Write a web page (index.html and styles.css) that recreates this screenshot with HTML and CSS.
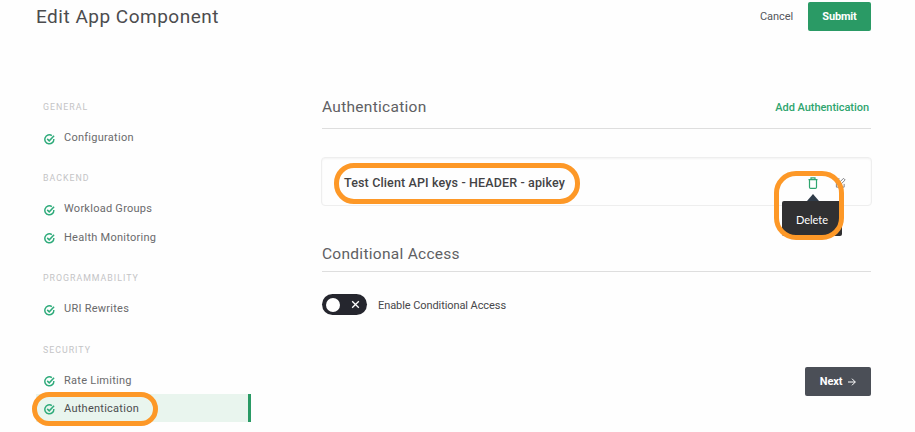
FILE: index.html
```html
<!DOCTYPE html>
<html lang="en">
<head>
<meta charset="utf-8">
<title>Edit App Component</title>
<link rel="stylesheet" href="styles.css">
</head>
<body>
<svg class="defs" width="0" height="0" aria-hidden="true">
  <symbol id="check" viewBox="0 0 12 12"><path d="M10.700 5.500A4.900 4.900 0 1 1 8.600 1.800M3.500 5.300l2.200 2.200 5.300-5.600"/></symbol>
</svg>
<header class="topbar">
  <h1 class="title"><span>Edit App Component</span></h1>
  <div class="actions">
    <button class="cancel"><span>Cancel</span></button>
    <button class="submit"><span>Submit</span></button>
  </div>
</header>
<div class="layout">
  <nav class="sidebar">
    <section class="group">
      <h2 class="label"><span>GENERAL</span></h2>
      <a class="item"><svg class="check"><use href="#check"/></svg><span>Configuration</span></a>
    </section>
    <section class="group">
      <h2 class="label"><span>BACKEND</span></h2>
      <a class="item"><svg class="check"><use href="#check"/></svg><span>Workload Groups</span></a>
      <a class="item"><svg class="check"><use href="#check"/></svg><span>Health Monitoring</span></a>
    </section>
    <section class="group">
      <h2 class="label"><span>PROGRAMMABILITY</span></h2>
      <a class="item"><svg class="check"><use href="#check"/></svg><span>URI Rewrites</span></a>
    </section>
    <section class="group">
      <h2 class="label"><span>SECURITY</span></h2>
      <a class="item"><svg class="check"><use href="#check"/></svg><span>Rate Limiting</span></a>
      <a class="item active"><svg class="check"><use href="#check"/></svg><span>Authentication</span><i class="ring ring-nav"></i></a>
    </section>
  </nav>
  <main class="content">
    <div class="section-head">
      <h2 class="heading"><span>Authentication</span></h2>
      <a class="add"><span>Add Authentication</span></a>
    </div>
    <div class="card">
      <span class="key">Test Client API keys - HEADER - apikey</span>
      <div class="tools">
        <div class="delete">
          <svg class="trash" viewBox="0 0 10 12"><path d="M.5 2.700h9M3 2.500V.8h4v1.700M1.500 3v7.200q0 1.200 1.200 1.200h4.600q1.200 0 1.200-1.200V3"/></svg>
          <div class="tooltip"><span>Delete</span></div>
        </div>
        <svg class="edit" viewBox="0 0 12 12"><path d="M5 1.500H1.500v9h8.500V7M4 8l.4-2.200L9.300.9l1.800 1.800L6.200 7.600z"/></svg>
      </div>
      <i class="ring ring-key"></i>
      <i class="ring ring-delete"></i>
    </div>
    <div class="section-head conditional">
      <h2 class="heading"><span>Conditional Access</span></h2>
    </div>
    <div class="toggle-row">
      <div class="toggle"><i class="knob"></i><svg class="cross" viewBox="0 0 8 8"><path d="M.2.200l7.600 7.600M7.800.2L.2 7.800"/></svg></div>
      <span class="toggle-label">Enable Conditional Access</span>
    </div>
    <button class="next"><span>Next</span><svg class="arrow" viewBox="0 0 8 8"><path d="M0 4h7.300M4 .7L7.300 4 4 7.300"/></svg></button>
  </main>
</div>
</body>
</html>
```
FILE: styles.css
```css
* { box-sizing: border-box; }
body {
  margin: 0;
  height: 432px;
  overflow: hidden;
  background: #fefefe;
  color: #4a4b4f;
  font-family: Roboto, "Liberation Sans", sans-serif;
}
h1, h2 { margin: 0; font-weight: 400; }
button { border: 0; padding: 0; font: inherit; background: none; }
svg { flex: none; fill: none; stroke: currentColor; overflow: visible; }
.defs { position: absolute; }

.topbar {
  display: flex;
  justify-content: space-between;
  height: 99px;
  padding: 2px 44px 0 36px;
}
.title { font-size: 19px; line-height: 29px; letter-spacing: 0.500px; color: #4c4c4e; }
.actions { display: flex; height: 29px; gap: 15px; }
.cancel { font-size: 11px; font-weight: 400; color: #55565c; letter-spacing: -0.080px; }
.submit {
  width: 63px;
  border-radius: 2px;
  background: #2a9a65;
  color: #fff;
  font-size: 11px;
  font-weight: 700;
  letter-spacing: -0.150px;
}

.layout { display: grid; grid-template-columns: 215px 549px; column-gap: 71px; padding-left: 36px; }
.sidebar { display: flex; flex-direction: column; gap: 20px; padding-top: 1px; }
.label {
  height: 14px;
  margin-bottom: 9px;
  padding-left: 7px;
  font-size: 8.800px;
  line-height: 14px;
  letter-spacing: 1px;
  color: #c4c4c6;
}
.item {
  position: relative;
  display: flex;
  height: 28.400px;
  padding-left: 8px;
  gap: 9px;
  font-size: 11px;
  line-height: 29px;
  letter-spacing: 0.260px;
  color: #6a6a6c;
}
.check { width: 11px; height: 11px; margin-top: 10.500px; stroke-width: 1.600; color: #2fab7b; }
.active { background: #e9f5ee; border-right: 3px solid #2a9a65; color: #4c4d4f; }

.section-head {
  display: flex;
  justify-content: space-between;
  height: 30px;
  border-bottom: 1px solid #dedede;
}
.heading { font-size: 15.500px; line-height: 17px; letter-spacing: 0.280px; color: #606063; }
.add { padding-right: 2px; font-size: 11px; line-height: 17px; font-weight: 500; letter-spacing: -0.050px; color: #2fa56f; }
.card {
  position: relative;
  display: flex;
  justify-content: space-between;
  height: 49px;
  margin: 28px -1px 0;
  padding: 0 25px 0 22px;
  border: 1px solid #eee;
  border-radius: 4px;
  box-shadow: inset 0 1px 2px #f3f3f3;
}
.key { font-size: 12.500px; font-weight: 500; line-height: 50px; letter-spacing: 0.140px; color: #434345; }
.tools { display: flex; gap: 17px; padding-top: 19px; }
.delete { position: relative; width: 10px; }
.trash { display: block; width: 10px; height: 12px; color: #2fa56f; stroke-width: 1.200; }
.edit { width: 11px; height: 12px; color: #77777b; stroke-width: 1; }
.tooltip {
  position: absolute;
  top: 24px;
  left: -26px;
  width: 60px;
  height: 35px;
  border-radius: 2px;
  background: #303032;
  color: #fff;
  font: 400 11px/37px Lato, sans-serif;
  text-align: center;
}
.tooltip::before {
  content: "";
  position: absolute;
  top: -7px;
  left: 25px;
  border: solid transparent;
  border-width: 0 6px 7px;
  border-bottom-color: #303c49;
}
.ring { position: absolute; border: 5px solid #fd9827; }
.ring-nav { top: -2px; left: -4px; width: 126px; height: 34px; border-radius: 17px; }
.ring-key { top: 5px; left: 12px; width: 246px; height: 41px; border-radius: 20px; }
.ring-delete { top: 13px; left: 452px; width: 70px; height: 69px; border-radius: 22px; }

.conditional { margin-top: 40px; height: 26px; }
.toggle-row { display: flex; align-items: center; gap: 11px; margin-top: 22px; height: 21px; }
.toggle {
  display: flex;
  align-items: center;
  justify-content: space-between;
  width: 45px;
  height: 21px;
  padding: 0 8px 0 4px;
  border-radius: 11px;
  background: #25262e;
  color: #fff;
}
.knob { width: 14px; height: 14px; border-radius: 50%; background: #fff; }
.cross { width: 7px; height: 7px; stroke-width: 1.500; }
.toggle-label { font-size: 11px; line-height: 21px; letter-spacing: -0.080px; padding-top: 1px; color: #47474a; }
.next {
  display: flex;
  align-items: center;
  justify-content: center;
  gap: 6px;
  width: 66px;
  height: 29px;
  margin: 52px 0 0 auto;
  border-radius: 2px;
  background: #4b4f57;
  color: #fff;
  font-size: 11px;
  font-weight: 700;
  letter-spacing: -0.150px;
}
.arrow { width: 8px; height: 8px; stroke-width: 1; }
```
